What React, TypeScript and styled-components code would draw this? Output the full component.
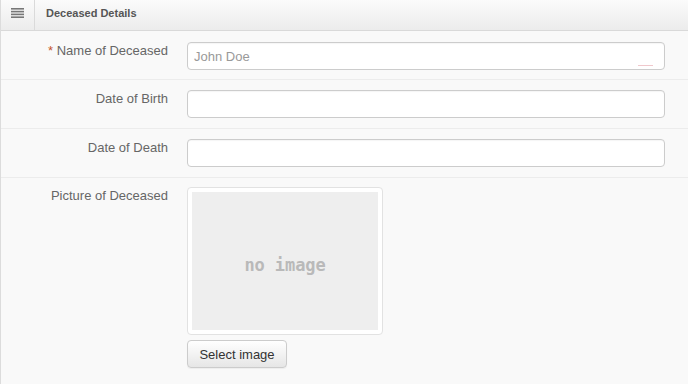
import styled, { createGlobalStyle } from 'styled-components'

const GlobalStyle = createGlobalStyle`
  html, body {
    margin: 0;
    padding: 0;
    background: #f9f9f9;
  }
  body {
    font-family: "Liberation Sans", Arial, sans-serif;
  }
`

const fields = [
  { label: 'Name of Deceased', required: true, placeholder: 'John Doe', marker: true },
  { label: 'Date of Birth' },
  { label: 'Date of Death' },
]

const App = () => {
  return (
    <>
      <GlobalStyle />
      <Panel>
        <PanelHeader>
          <IconCell>
            <svg width="13" height="10" viewBox="0 0 13 10">
              <rect x="0" y="0" width="13" height="1.6" fill="#777" />
              <rect x="0" y="2.8" width="13" height="1.6" fill="#777" />
              <rect x="0" y="5.6" width="13" height="1.6" fill="#777" />
              <rect x="0" y="8.4" width="13" height="1.6" fill="#777" />
            </svg>
          </IconCell>
          <Title>Deceased Details</Title>
        </PanelHeader>
        {fields.map((f, i) => (
          <Row key={f.label} $first={i === 0}>
            <Label>
              {f.required && <Required>* </Required>}
              {f.label}
            </Label>
            <InputWrap>
              <TextInput placeholder={f.placeholder} />
              {f.marker && <Marker />}
            </InputWrap>
          </Row>
        ))}
        <Row $last>
          <Label>Picture of Deceased</Label>
          <ImageColumn>
            <Thumb>
              <NoImage>no image</NoImage>
            </Thumb>
            <Button type="button">Select image</Button>
          </ImageColumn>
        </Row>
      </Panel>
    </>
  )
}

const Panel = styled.div`
  min-height: 384px;
  border-left: 1px solid #dcdcdc;
  background: #f9f9f9;
  box-sizing: border-box;
`
const PanelHeader = styled.div`
  display: flex;
  align-items: stretch;
  height: 30px;
  border-bottom: 1px solid #d9d9d9;
  background: linear-gradient(to bottom, #fbfbfb 0%, #ececec 100%);
`
const IconCell = styled.div`
  width: 34px;
  display: flex;
  align-items: center;
  justify-content: center;
  padding-bottom: 4px;
  border-right: 1px solid #dadada;
  box-sizing: border-box;
`
const Title = styled.div`
  display: flex;
  align-items: center;
  padding: 0 0 5px 11px;
  font-size: 11px;
  font-weight: bold;
  color: #555;
`
const Row = styled.div<{ $first?: boolean; $last?: boolean }>`
  display: grid;
  grid-template-columns: 167px 1fr;
  column-gap: 19px;
  padding: ${(p) => (p.$first ? '11px' : p.$last ? '9px' : '10px')} 23px
    ${(p) => (p.$first ? '9px' : '10px')} 0;
  border-bottom: ${(p) => (p.$last ? 'none' : '1px solid #ececec')};
`
const Label = styled.div`
  text-align: right;
  font-size: 13px;
  line-height: 17px;
  color: #666;
`
const Required = styled.span`
  color: #c5562c;
`
const InputWrap = styled.div`
  position: relative;
`
const TextInput = styled.input`
  display: block;
  width: 100%;
  height: 28px;
  box-sizing: border-box;
  border: 1px solid #cccccc;
  border-radius: 4px;
  background: #fff;
  padding: 0 6px;
  font-family: "Liberation Sans", Arial, sans-serif;
  font-size: 13px;
  color: #555;
  box-shadow: inset 0 1px 1px rgba(0, 0, 0, 0.04);
  outline: none;
  &::placeholder {
    color: #999;
  }
`
const Marker = styled.span`
  position: absolute;
  right: 12px;
  bottom: 4px;
  width: 15px;
  height: 1px;
  background: #f0c8cc;
`
const ImageColumn = styled.div`
  display: flex;
  flex-direction: column;
  align-items: flex-start;
  gap: 5px;
`
const Thumb = styled.div`
  width: 196px;
  height: 148px;
  box-sizing: border-box;
  padding: 4px;
  border: 1px solid #e2e2e2;
  border-radius: 4px;
  background: #fff;
  display: flex;
`
const NoImage = styled.div`
  flex: 1;
  background: #eeeeee;
  display: flex;
  align-items: center;
  justify-content: center;
  font-family: "DejaVu Sans Mono", "Liberation Mono", monospace;
  font-weight: bold;
  font-size: 17px;
  color: #b9b9b9;
  letter-spacing: -0.1px;
  padding-top: 8px;
`
const Button = styled.button`
  width: 100px;
  height: 28px;
  border: 1px solid #cccccc;
  border-radius: 4px;
  background: linear-gradient(to bottom, #ffffff 0%, #e6e6e6 100%);
  box-shadow: 0 1px 1px rgba(0, 0, 0, 0.05);
  font-family: "Liberation Sans", Arial, sans-serif;
  font-size: 13px;
  color: #333;
  padding: 0;
  cursor: pointer;
`

export default App
